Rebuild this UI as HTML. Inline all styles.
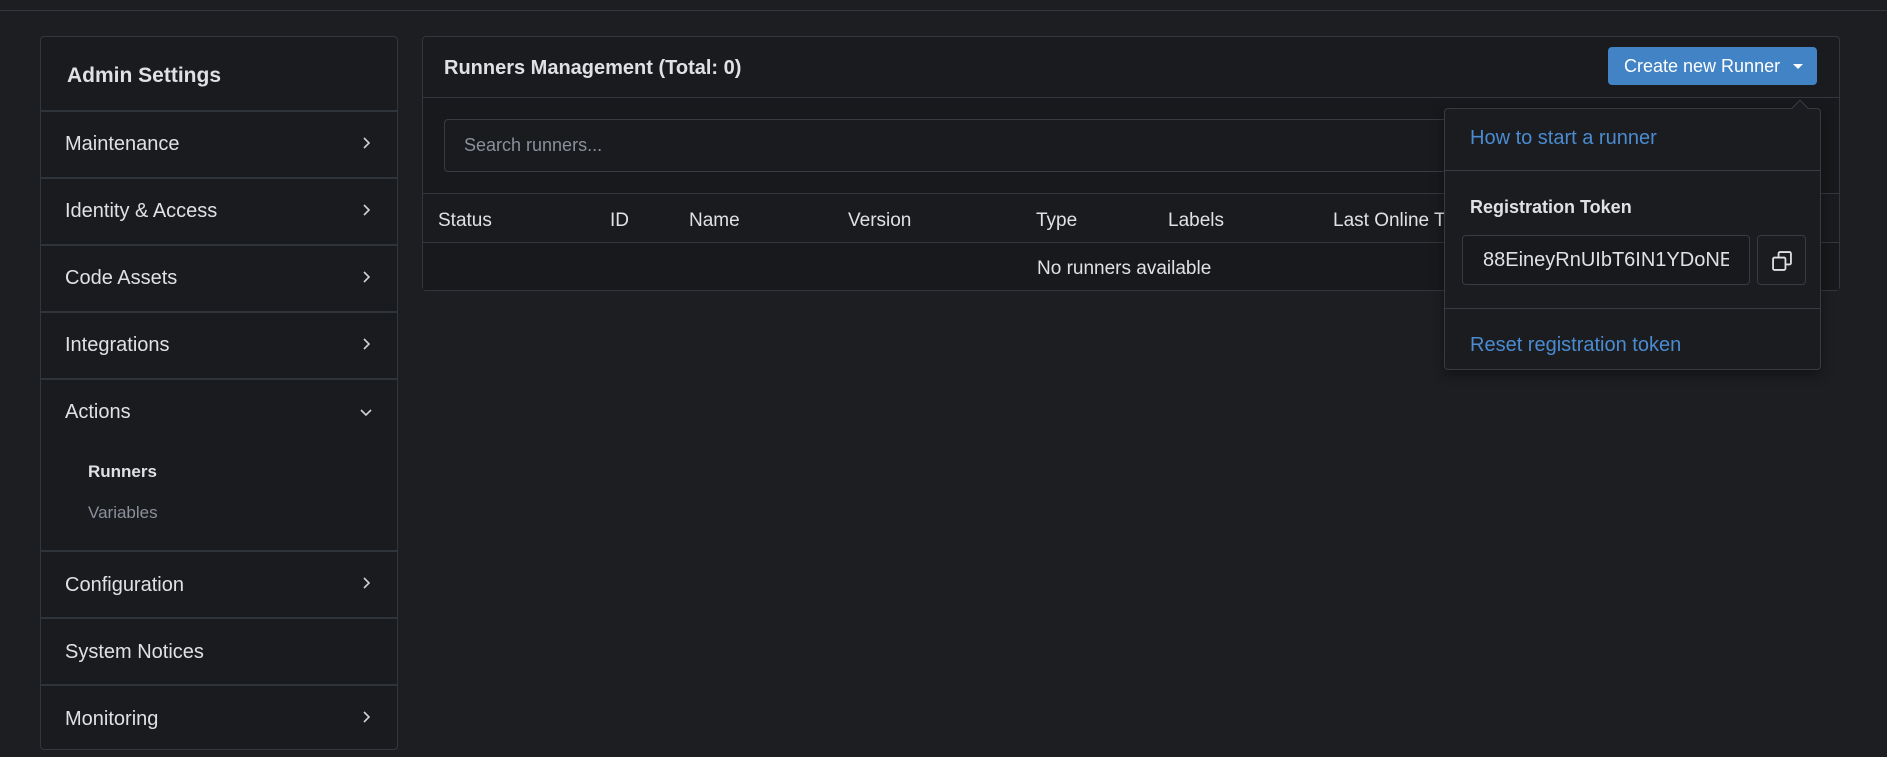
<!DOCTYPE html>
<html><head><meta charset="utf-8"><style>
*{box-sizing:border-box;margin:0;padding:0}
body{width:1887px;height:757px;background:#1c1e22;font-family:"Liberation Sans",sans-serif;color:#dfe1e4;position:relative;overflow:hidden}
.a{position:absolute}
.topline{left:0;top:10px;width:1887px;height:1px;background:#33363c}
.side{left:40px;top:36px;width:358px;height:714px;background:#191b1f;border:1px solid #33363c;border-radius:4px}
.div{position:absolute;left:0;width:356px;height:2px;background:#2f333a}
.it{position:absolute;left:24px;font-size:20px;color:#dfe1e4;line-height:24px}
.chev{position:absolute;left:318px;width:14px;height:14px}
.main{left:422px;top:36px;width:1418px;height:255px;background:#191b1f;border:1px solid #33363c;border-radius:4px}
.th{position:absolute;top:172px;font-size:19px;line-height:24px}
.btn{left:1608px;top:47px;width:209px;height:38px;background:#4183c4;border-radius:4px;color:#fff;font-size:18px;line-height:38px;padding-left:16px}
.dd{left:1444px;top:108px;width:377px;height:262px;background:#1a1c20;border:1px solid #383b42;border-radius:4px;box-shadow:0 4px 12px rgba(0,0,0,.4)}
.link{color:#4b8bd0;font-size:20px;line-height:24px;position:absolute;left:25px}
</style></head><body>
<div class="a topline"></div>
<div class="a side">
  <div style="position:absolute;left:26px;top:26px;font-size:21px;font-weight:bold;line-height:26px">Admin Settings</div>
  <div class="div" style="top:73px"></div>
  <div class="it" style="top:95px">Maintenance</div>
  <div class="div" style="top:140px"></div>
  <div class="it" style="top:162px">Identity &amp; Access</div>
  <div class="div" style="top:207px"></div>
  <div class="it" style="top:229px">Code Assets</div>
  <div class="div" style="top:274px"></div>
  <div class="it" style="top:296px">Integrations</div>
  <div class="div" style="top:341px"></div>
  <div class="it" style="top:363px">Actions</div>
  <div style="position:absolute;left:47px;top:425px;font-size:17px;font-weight:bold;line-height:20px">Runners</div>
  <div style="position:absolute;left:47px;top:466px;font-size:17px;color:#8b9099;line-height:20px">Variables</div>
  <div class="div" style="top:513px"></div>
  <div class="it" style="top:536px">Configuration</div>
  <div class="div" style="top:580px"></div>
  <div class="it" style="top:603px">System Notices</div>
  <div class="div" style="top:647px"></div>
  <div class="it" style="top:670px">Monitoring</div>
  <svg class="chev" style="top:99px" viewBox="0 0 14 14"><path d="M5 2l5 5-5 5" fill="none" stroke="#cfd2d6" stroke-width="1.6"/></svg>
  <svg class="chev" style="top:166px" viewBox="0 0 14 14"><path d="M5 2l5 5-5 5" fill="none" stroke="#cfd2d6" stroke-width="1.6"/></svg>
  <svg class="chev" style="top:233px" viewBox="0 0 14 14"><path d="M5 2l5 5-5 5" fill="none" stroke="#cfd2d6" stroke-width="1.6"/></svg>
  <svg class="chev" style="top:300px" viewBox="0 0 14 14"><path d="M5 2l5 5-5 5" fill="none" stroke="#cfd2d6" stroke-width="1.6"/></svg>
  <svg class="chev" style="top:368px" viewBox="0 0 14 14"><path d="M2 5l5 5 5-5" fill="none" stroke="#cfd2d6" stroke-width="1.6"/></svg>
  <svg class="chev" style="top:539px" viewBox="0 0 14 14"><path d="M5 2l5 5-5 5" fill="none" stroke="#cfd2d6" stroke-width="1.6"/></svg>
  <svg class="chev" style="top:673px" viewBox="0 0 14 14"><path d="M5 2l5 5-5 5" fill="none" stroke="#cfd2d6" stroke-width="1.6"/></svg>
</div>
<div class="a main">
  <div style="position:absolute;left:21px;top:19px;font-size:20px;font-weight:bold;line-height:24px">Runners Management (Total: 0)</div>
  <div style="position:absolute;left:0;top:60px;width:1416px;height:1px;background:#33363c"></div>
  <div style="position:absolute;left:0;top:61px;width:1416px;height:96px;background:#17191c"></div>
  <div style="position:absolute;left:21px;top:82px;width:1100px;height:53px;border:1px solid #383b42;border-radius:4px;background:#191b1f;font-size:18px;color:#8b9099;line-height:51px;padding-left:19px">Search runners...</div>
  <div style="position:absolute;left:0;top:156px;width:1416px;height:1px;background:#33363c"></div>
  <div class="th" style="left:15px">Status</div>
  <div class="th" style="left:187px">ID</div>
  <div class="th" style="left:266px">Name</div>
  <div class="th" style="left:425px">Version</div>
  <div class="th" style="left:613px">Type</div>
  <div class="th" style="left:745px">Labels</div>
  <div class="th" style="left:910px">Last Online Time</div>
  <div style="position:absolute;left:0;top:205px;width:1416px;height:1px;background:#33363c"></div>
  <div style="position:absolute;left:0;top:206px;width:1416px;height:47px;background:#17191c"></div>
  <div style="position:absolute;left:614px;top:220px;font-size:19px;line-height:24px">No runners available</div>
</div>
<div class="a btn">Create new Runner<span style="position:absolute;left:185px;top:17px;width:0;height:0;border-left:5px solid transparent;border-right:5px solid transparent;border-top:5px solid #fff"></span></div>
<div class="a dd">
  <div style="position:absolute;left:349px;top:-7px;width:12px;height:12px;background:#1a1c20;border-left:1px solid #383b42;border-top:1px solid #383b42;transform:rotate(45deg)"></div>
  <div class="link" style="top:17px">How to start a runner</div>
  <div style="position:absolute;left:0;top:61px;width:375px;height:1px;background:#383b42"></div>
  <div style="position:absolute;left:25px;top:87px;font-size:18px;font-weight:bold;line-height:22px">Registration Token</div>
  <div style="position:absolute;left:17px;top:126px;width:288px;height:50px;border:1px solid #383b42;border-radius:4px;background:#18191c;overflow:hidden;font-size:20px;line-height:48px;padding-left:20px;white-space:nowrap"><span style="display:inline-block;width:246px;overflow:hidden">88EineyRnUIbT6IN1YDoNE</span></div>
  <div style="position:absolute;left:312px;top:126px;width:49px;height:50px;border:1px solid #383b42;border-radius:4px">
    <svg style="position:absolute;left:13px;top:14px" width="22" height="22" viewBox="0 0 16 16"><path d="M5.5 5.5V2.5a1 1 0 0 1 1-1h7a1 1 0 0 1 1 1v7a1 1 0 0 1-1 1h-3M1.5 6.5a1 1 0 0 1 1-1h7a1 1 0 0 1 1 1v7a1 1 0 0 1-1 1h-7a1 1 0 0 1-1-1z" fill="none" stroke="#dfe1e4" stroke-width="1.3"/></svg>
  </div>
  <div style="position:absolute;left:0;top:199px;width:375px;height:1px;background:#383b42"></div>
  <div class="link" style="top:224px">Reset registration token</div>
</div>
</body></html>
